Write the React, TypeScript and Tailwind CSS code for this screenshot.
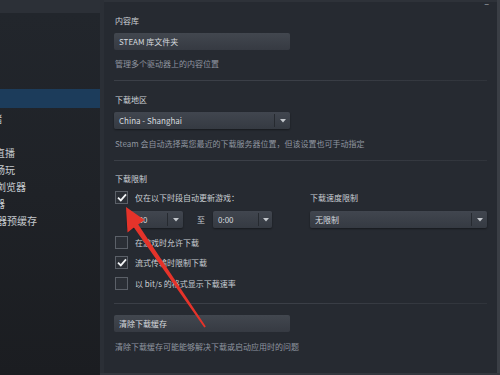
import React from 'react';

const font = "font-['Noto_Sans_CJK_SC','Noto_Sans',sans-serif]";

const Caret = () => (
  <svg width="6" height="4" viewBox="0 0 6 4" className="block">
    <path d="M0 0 H6 L3 3.5 Z" fill="#c3c7cc" />
  </svg>
);

const Select = ({ label, width, caretW = 16 }: { label: string; width: number; caretW?: number }) => (
  <div
    className="flex h-[17px] shrink-0 rounded-[2px] bg-gradient-to-b from-[#41464f] to-[#353a42] shadow-[0_1px_2px_rgba(0,0,0,0.4)]"
    style={{ width }}
  >
    <div className="flex flex-1 items-center overflow-hidden whitespace-nowrap pl-[5px] text-[8px] leading-[11px] text-[#d6dadf]">
      {label}
    </div>
    <div className="my-[2px] w-px bg-[#262a30]" />
    <div className="flex items-center justify-center" style={{ width: caretW }}>
      <Caret />
    </div>
  </div>
);

const Check = ({ checked }: { checked?: boolean }) => (
  <div className="flex h-[13px] w-[13px] items-center justify-center border border-[#5b6068] bg-[#2b2f36]">
    {checked && (
      <svg width="10" height="9" viewBox="0 0 10 9">
        <path d="M1 4.6 L3.8 7.4 L9 1.4" stroke="#f2f4f6" strokeWidth="1.8" fill="none" />
      </svg>
    )}
  </div>
);

const CheckRow = ({ checked, label }: { checked?: boolean; label: string }) => (
  <div className="flex h-[13px] items-center gap-[7px] pl-px">
    <Check checked={checked} />
    <span className="whitespace-nowrap text-[8px] leading-[11px] text-[#c9ced3]">{label}</span>
  </div>
);

const Heading = ({ children, className = '' }: { children: React.ReactNode; className?: string }) => (
  <div className={`h-[11px] pl-px text-[8px] leading-[11px] text-[#cdd2d7] ${className}`}>{children}</div>
);

const Desc = ({ children, className = '' }: { children: React.ReactNode; className?: string }) => (
  <div className={`h-[11px] whitespace-nowrap pl-px text-[8px] leading-[11px] text-[#9096a0] ${className}`}>{children}</div>
);

const Sep = ({ className = '' }: { className?: string }) => (
  <div className={`h-px w-[373px] bg-gradient-to-r from-[#3b3f47] via-[#3b3f47] to-[#30343b] ${className}`} />
);

const Button = ({ label }: { label: string }) => (
  <div className="flex h-[17px] w-[176px] items-center rounded-[2px] bg-gradient-to-b from-[#42474f] to-[#363a42] pl-[5px] text-[8px] leading-[11px] text-[#d6dadf]">
    {label}
  </div>
);

// the nav is cut off at the left edge, only the tails of the labels show
const navItems: { label: string; h: number; off: number; active?: boolean }[] = [
  { label: '界面', h: 41, off: -23 },
  { label: '游戏中', h: 17, off: -32 },
  { label: '家庭', h: 17, off: -23 },
  { label: '下载', h: 19, off: -23, active: true },
  { label: '云存储', h: 19, off: -28 },
  { label: '语音', h: 17, off: -23 },
  { label: '游戏直播', h: 17, off: -25 },
  { label: '远程畅玩', h: 17, off: -25 },
  { label: '网页浏览器', h: 17, off: -24 },
  { label: '控制器', h: 17, off: -25 },
  { label: '着色器预缓存', h: 17, off: -23 },
];

export default function App() {
  return (
    <div className={`relative flex h-[375px] w-[500px] overflow-hidden bg-[#262a31] ${font}`}>
      {/* left settings nav */}
      <div className="flex h-full w-[100px] shrink-0 flex-col bg-[#2c3037] pt-[13px]">
        <div className="flex flex-1 flex-col overflow-hidden bg-gradient-to-b from-[#22262c] via-[#1f2227] to-[#1b1d21] pt-[1px]">
          {navItems.map((item) => (
            <div
              key={item.label}
              className={`flex shrink-0 items-end pb-[2px] ${item.active ? 'bg-[#1c3c5b]' : ''}`}
              style={{ height: item.h }}
            >
              <div
                className="whitespace-nowrap text-[10px] leading-[13px] text-[#c4c9ce]"
                style={{ marginLeft: item.off }}
              >
                {item.label}
              </div>
            </div>
          ))}
        </div>
      </div>
      <div className="w-[4px] shrink-0 bg-[#2b2f36]" />

      {/* main panel */}
      <div className="relative flex flex-1 flex-col border-t-2 border-[#2e3239] pl-[10px] pt-[13px]">
        <span className="absolute right-[8px] top-[-3px] text-[9px] leading-[10px] text-[#aab0b7]">–</span>

        <Heading>内容库</Heading>
        <div className="mt-[7px]">
          <Button label="STEAM 库文件夹" />
        </div>
        <Desc className="mt-[8px]">管理多个驱动器上的内容位置</Desc>
        <Sep className="mt-[11px]" />

        <Heading className="mt-[13px]">下载地区</Heading>
        <div className="mt-[7px]">
          <Select label="China - Shanghai" width={176} caretW={15} />
        </div>
        <Desc className="mt-[9px]">Steam 会自动选择离您最近的下载服务器位置，但该设置也可手动指定</Desc>
        <Sep className="mt-[11px]" />

        <Heading className="mt-[12px]">下载限制</Heading>
        <div className="flex gap-[38px]">
          <div className="flex w-[158px] flex-col">
            <div className="mt-[7px]">
              <CheckRow checked label="仅在以下时段自动更新游戏：" />
            </div>
            <div className="mt-[7px] flex items-center pl-[13px]">
              <Select label="0:00" width={56} caretW={15} />
              <span className="ml-[14px] text-[8px] leading-[11px] text-[#c9ced3]">至</span>
              <div className="ml-[8px]">
                <Select label="0:00" width={59} caretW={13} />
              </div>
            </div>
            <div className="mt-[8px]">
              <CheckRow label="在游戏时允许下载" />
            </div>
            <div className="mt-[7px]">
              <CheckRow checked label="流式传输时限制下载" />
            </div>
            <div className="mt-[8px]">
              <CheckRow label="以 bit/s 的格式显示下载速率" />
            </div>
          </div>

          {/* speed limit column */}
          <div className="flex flex-col pt-[8px]">
            <div className="h-[11px] whitespace-nowrap text-[8px] leading-[11px] text-[#c9ced3]">下载速度限制</div>
            <div className="mt-[8px]">
              <Select label="无限制" width={177} caretW={15} />
            </div>
          </div>
        </div>
        <Sep className="mt-[13px]" />
        <div className="mt-[11px]">
          <Button label="清除下载缓存" />
        </div>
        <Desc className="mt-[9px]">清除下载缓存可能能够解决下载或启动应用时的问题</Desc>
      </div>
      <div className="w-[3px] shrink-0 bg-[#3a3e45]" />

      {/* red annotation arrow */}
      <svg className="pointer-events-none absolute inset-0" width="500" height="375" viewBox="0 0 500 375">
        <polygon
          points="126,207 144.5,220 138.2,224.6 205.8,326.5 204.3,327.6 133.9,227.4 127.5,232.5"
          fill="#e5332a"
        />
      </svg>
      <div className="absolute bottom-0 left-[100px] right-0 h-[2px] bg-[#33373e]" />
    </div>
  );
}
